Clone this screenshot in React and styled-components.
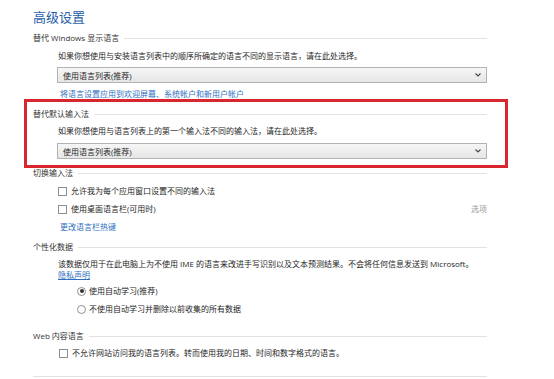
import React from "react";
import styled, { createGlobalStyle } from "styled-components";

const GlobalStyle = createGlobalStyle`
  html, body {
    margin: 0;
    padding: 0;
    background: #ffffff;
  }
  body {
    font-family: "Open Sans", "Noto Sans CJK SC", sans-serif;
    -webkit-font-smoothing: antialiased;
  }
`;

const Page = styled.div`
  position: relative;
  width: 554px;
  height: 379px;
  overflow: hidden;
  background: #fff;
`;

const Content = styled.div`
  display: flex;
  flex-direction: column;
  width: 454px;
  margin-left: 33px;
`;

const Title = styled.h1`
  margin: 9px 0 0;
  height: 16px;
  line-height: 16px;
  font-size: 13px;
  font-weight: 400;
  color: #1f5ea8;
  font-family: "Noto Sans CJK SC", sans-serif;
`;

const Row = styled.div`
  display: flex;
  align-items: center;
  height: 12px;
  margin-top: ${(p) => p.$mt || 0}px;
  padding-left: ${(p) => p.$indent || 0}px;
  font-size: 8px;
  line-height: 12px;
  color: #262626;
  white-space: nowrap;
`;

const Header = styled(Row)`
  gap: 5px;
  color: #333;
  &::after {
    content: "";
    flex: 1;
    height: 1px;
    background: #e2e2e2;
  }
`;

const Para = styled.p`
  margin: ${(p) => p.$mt || 0}px 0 0;
  padding-left: 25px;
  font-size: 8px;
  line-height: 10.5px;
  color: #262626;
  white-space: nowrap;
`;

const Link = styled.a`
  color: #2f6fc2;
  text-decoration: ${(p) => (p.$underline ? "underline" : "none")};
  cursor: pointer;
`;

const Select = styled.div`
  display: flex;
  align-items: center;
  justify-content: space-between;
  box-sizing: border-box;
  height: 16px;
  margin: ${(p) => p.$mt || 0}px 0 0 24px;
  padding: 0 5px 0 5px;
  border: 1px solid #b3b3b3;
  background: linear-gradient(#f6f6f6, #e6e6e6);
  font-size: 8px;
  color: #262626;
`;

const Box = styled.span`
  box-sizing: border-box;
  width: 9px;
  height: 9px;
  margin-right: 4px;
  border: 1px solid #8f8f8f;
  background: #fff;
  flex-shrink: 0;
`;

const Radio = styled.span`
  box-sizing: border-box;
  width: 9px;
  height: 9px;
  margin-right: 3px;
  border: 1px solid #8f8f8f;
  border-radius: 50%;
  background: #fff;
  display: flex;
  align-items: center;
  justify-content: center;
  flex-shrink: 0;
  &::after {
    content: "";
    display: ${(p) => (p.$checked ? "block" : "none")};
    width: 4px;
    height: 4px;
    border-radius: 50%;
    background: #333;
  }
`;

const Spacer = styled.span`
  flex: 1;
`;

const Muted = styled.span`
  color: #9a9a9a;
`;

const BottomRule = styled.div`
  height: 1px;
  margin-top: 17px;
  background: #e2e2e2;
`;

const Highlight = styled.div`
  position: absolute;
  left: 24px;
  top: 99px;
  width: 484px;
  height: 69px;
  box-sizing: border-box;
  border: 3px solid #d8262e;
  pointer-events: none;
`;

const Chevron = () => (
  <svg width="6" height="4" viewBox="0 0 6 4">
    <path d="M0.5 0.5 L3 3 L5.5 0.5" fill="none" stroke="#444" strokeWidth="1.1" />
  </svg>
);

export default function App() {
  return (
    <Page>
      <GlobalStyle />
      <Content>
        <Title>高级设置</Title>

        <Header $mt={7}>替代 Windows 显示语言</Header>
        <Row $mt={6} $indent={25}>
          如果你想使用与安装语言列表中的顺序所确定的语言不同的显示语言，请在此处选择。
        </Row>
        <Select $mt={5}>
          <span>使用语言列表(推荐)</span>
          <Chevron />
        </Select>
        <Row $mt={5} $indent={27}>
          <Link>将语言设置应用到欢迎屏幕、系统帐户和新用户帐户</Link>
        </Row>

        <Header $mt={8}>替代默认输入法</Header>
        <Row $mt={5} $indent={25}>
          如果你想使用与语言列表上的第一个输入法不同的输入法，请在此处选择。
        </Row>
        <Select $mt={6}>
          <span>使用语言列表(推荐)</span>
          <Chevron />
        </Select>

        <Header $mt={8}>切换输入法</Header>
        <Row $mt={6} $indent={25}>
          <Box />
          允许我为每个应用窗口设置不同的输入法
        </Row>
        <Row $mt={6} $indent={25}>
          <Box />
          使用桌面语言栏(可用时)
          <Spacer />
          <Muted>选项</Muted>
        </Row>
        <Row $mt={6} $indent={27}>
          <Link>更改语言栏热键</Link>
        </Row>

        <Header $mt={8}>个性化数据</Header>
        <Para $mt={6}>
          该数据仅用于在此电脑上为不使用 IME 的语言来改进手写识别以及文本预测结果。不会将任何信息发送到 Microsoft。
          <br />
          <Link $underline>隐私声明</Link>
        </Para>
        <Row $mt={5} $indent={44}>
          <Radio $checked />
          使用自动学习(推荐)
        </Row>
        <Row $mt={6} $indent={44}>
          <Radio />
          不使用自动学习并删除以前收集的所有数据
        </Row>

        <Header $mt={15}>Web 内容语言</Header>
        <Row $mt={5} $indent={26}>
          <Box />
          不允许网站访问我的语言列表。转而使用我的日期、时间和数字格式的语言。
        </Row>
        <BottomRule />
      </Content>
      <Highlight />
    </Page>
  );
}
